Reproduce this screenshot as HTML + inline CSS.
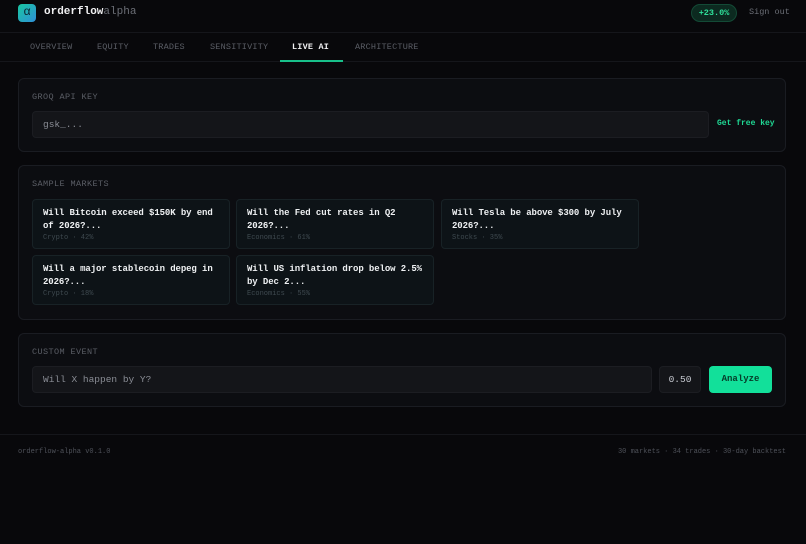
<!DOCTYPE html>
<html><head><meta charset="utf-8"><style>
*{box-sizing:border-box;margin:0;padding:0}
body{width:806px;height:544px;background:#08080b;font-family:"Liberation Mono",monospace;color:#d8dbe0;position:relative;overflow:hidden}
.abs{position:absolute}
.hdr{left:0;top:0;width:806px;height:33px;border-bottom:1px solid #15161b}
.logo{left:18px;top:4px;width:18px;height:18px;border-radius:4px;background:linear-gradient(135deg,#18c7a0,#2f8fd8);color:#0b2530;font-size:12px;text-align:center;line-height:17px}
.brand{left:44px;top:6px;font-size:11px;font-weight:bold;color:#f0f0f2}
.brand span{color:#6b6e76;font-weight:normal}
.pill{left:691px;top:4px;width:46px;height:18px;border-radius:9px;background:#0c2a20;border:1px solid #134a36;color:#2fe09a;font-size:8.5px;font-weight:bold;text-align:center;line-height:16px}
.so{left:749px;top:7px;font-size:8.5px;color:#6b6e76}
.nav{left:0;top:34px;width:806px;height:28px;border-bottom:1px solid #15161b}
.tab{top:42px;font-size:8.5px;color:#5b5e66;letter-spacing:.2px}
.tab.on{color:#f0f0f2;font-weight:bold}
.ul{left:280px;top:60px;width:63px;height:2px;background:#18c08a}
.panel{left:18px;width:768px;border:1px solid #1a1c22;border-radius:6px;background:#0c0d11}
.lbl{font-size:8.5px;color:#5b5e66;letter-spacing:.4px}
.inp{background:#141519;border:1px solid #1c1d22;border-radius:4px;font-size:9.5px;color:#8a8d95}
.card{width:198px;height:50px;border:1px solid #182226;border-radius:4px;background:#0d1317;padding:7px 8px 7px 10px}
.card b{display:block;font-size:9px;line-height:12.5px;color:#eef0f2;letter-spacing:-.1px}
.card i{display:block;font-style:normal;font-size:7px;color:#3f4a50;margin-top:2px}
.btn{left:709px;top:366px;width:63px;height:27px;border-radius:4px;background:#12e09a;color:#063a28;font-size:9px;font-weight:bold;text-align:center;line-height:27px}
.foot{left:0;top:434px;width:806px;border-top:1px solid #15161b}
.ft{top:448px;font-size:7px;color:#4e5159}
</style></head><body>
<div class="abs hdr"></div>
<div class="abs logo">α</div>
<div class="abs brand">orderflow<span>alpha</span></div>
<div class="abs pill">+23.0%</div>
<div class="abs so">Sign out</div>
<div class="abs nav"></div>
<div class="abs tab" style="left:30px">OVERVIEW</div>
<div class="abs tab" style="left:97px">EQUITY</div>
<div class="abs tab" style="left:153px">TRADES</div>
<div class="abs tab" style="left:210px">SENSITIVITY</div>
<div class="abs tab on" style="left:292px">LIVE AI</div>
<div class="abs tab" style="left:355px">ARCHITECTURE</div>
<div class="abs ul"></div>

<div class="abs panel" style="top:78px;height:74px"></div>
<div class="abs lbl" style="left:32px;top:92px">GROQ API KEY</div>
<div class="abs inp" style="left:32px;top:111px;width:677px;height:27px;padding:7px 10px">gsk_...</div>
<div class="abs" style="left:717px;top:119px;font-size:8px;color:#1fd894;font-weight:bold">Get free key</div>

<div class="abs panel" style="top:165px;height:155px"></div>
<div class="abs lbl" style="left:32px;top:179px">SAMPLE MARKETS</div>
<div class="abs card" style="left:32px;top:199px"><b>Will Bitcoin exceed $150K by end of 2026?...</b><i>Crypto · 42%</i></div>
<div class="abs card" style="left:236px;top:199px"><b>Will the Fed cut rates in Q2 2026?...</b><i>Economics · 61%</i></div>
<div class="abs card" style="left:441px;top:199px"><b>Will Tesla be above $300 by July 2026?...</b><i>Stocks · 35%</i></div>
<div class="abs card" style="left:32px;top:255px"><b>Will a major stablecoin depeg in 2026?...</b><i>Crypto · 18%</i></div>
<div class="abs card" style="left:236px;top:255px"><b>Will US inflation drop below 2.5% by Dec 2...</b><i>Economics · 55%</i></div>

<div class="abs panel" style="top:333px;height:74px"></div>
<div class="abs lbl" style="left:32px;top:347px">CUSTOM EVENT</div>
<div class="abs inp" style="left:32px;top:366px;width:620px;height:27px;padding:7px 10px">Will X happen by Y?</div>
<div class="abs inp" style="left:659px;top:366px;width:42px;height:27px;padding:7px 0;text-align:center;color:#c8cbd2">0.50</div>
<div class="abs btn">Analyze</div>

<div class="abs foot"></div>
<div class="abs ft" style="left:18px">orderflow-alpha v0.1.0</div>
<div class="abs ft" style="right:20px">30 markets · 34 trades · 30-day backtest</div>
</body></html>
